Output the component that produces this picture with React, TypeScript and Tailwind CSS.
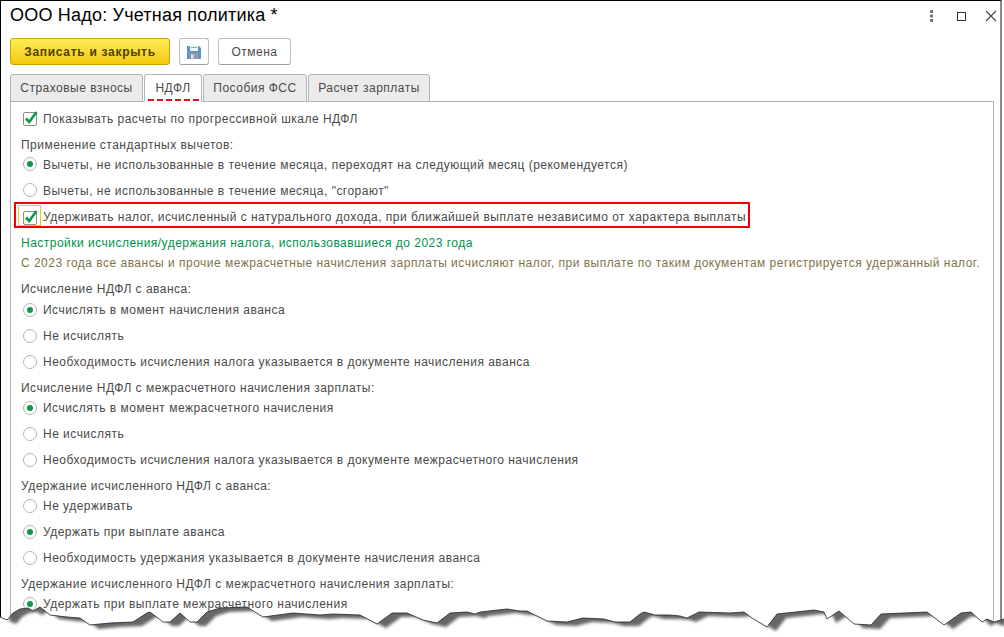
const font = { fontFamily: '"Liberation Sans", Arial, sans-serif' };

const edge: [number, number][] = [
  [0, 617], [7, 620], [13, 613], [20, 609], [28, 608], [33, 611], [40, 607], [50, 615], [67, 617], [80, 618],
  [90, 625], [110, 623], [133, 622], [147, 613], [150, 612], [163, 622], [170, 622], [180, 613], [190, 622],
  [197, 622], [207, 612], [220, 608], [247, 607], [263, 617], [293, 613], [320, 615], [333, 614], [360, 615],
  [377, 624], [392, 613], [407, 613], [423, 620], [437, 623], [450, 613], [467, 612], [475, 614], [480, 612],
  [507, 609], [520, 611], [527, 611], [547, 621], [567, 622], [583, 618], [604, 619], [615, 622], [630, 622],
  [640, 614], [644, 612], [655, 615], [670, 615], [680, 616], [687, 618], [699, 612], [730, 613], [744, 612],
  [752, 618], [767, 627], [777, 614], [814, 610], [824, 612], [827, 619], [839, 611], [854, 624], [871, 625],
  [881, 614], [927, 612], [944, 625], [961, 613], [971, 612], [982, 622], [987, 619], [994, 622], [1004, 619],
];
const line = edge.map(([x, y]) => `${x},${y}`).join(" ");

function Check() {
  return (
    <svg width="16" height="16" viewBox="0 0 16 16" className="shrink-0">
      <rect x="0.5" y="2.5" width="13" height="13" rx="1.5" fill="#fff" stroke="#8f8f8f" />
      <path d="M3 8.5 L6.2 12 L13.5 2" fill="none" stroke="#0b9a4b" strokeWidth="2.6" />
    </svg>
  );
}

function Radio({ on }: { on?: boolean }) {
  return (
    <span className="w-[14px] h-[14px] shrink-0 rounded-full border border-[#b4b4b4] bg-white flex items-center justify-center">
      {on && <span className="w-[6px] h-[6px] rounded-full bg-[#0b9a4b]" />}
    </span>
  );
}

function Option({ text, on, mt, tx = "" }: { text: string; on?: boolean; mt: string; tx?: string }) {
  return (
    <div className={`h-[20px] flex items-center pl-[12px] gap-[6px] ${mt}`}>
      <Radio on={on} />
      <span className={tx}>{text}</span>
    </div>
  );
}

function Label({ text, mt, tx = "" }: { text: string; mt: string; tx?: string }) {
  return <div className={`h-[20px] flex items-center pl-[10px] ${mt} ${tx}`}>{text}</div>;
}

function Tab({ text, w, active }: { text: string; w: string; active?: boolean }) {
  return (
    <div
      className={`relative h-[28px] flex items-center justify-center border border-[#b4b4b4] rounded-t-[3px] ${w} ${
        active ? "bg-white border-b-white z-10" : "bg-[#ebebeb]"
      }`}
    >
      {text}
      {active && <span className="absolute left-[3px] right-[2px] bottom-0 border-b-2 border-dashed border-[#e81010]" />}
    </div>
  );
}

export default function App() {
  return (
    <div style={font} className="relative w-[1004px] h-[637px] overflow-hidden bg-white text-[12px] tracking-[0.48px] text-[#4a4a4a]">
      <div className="w-[1002px] h-[637px] border-t border-l border-t-black border-l-black border-r-2 border-r-[#8a8a8a] flex flex-col">
        <div className="h-[29px] flex items-center justify-between pl-[9px] pr-[3px] shrink-0">
          <span className="text-[18px] tracking-[0.2px] text-black">ООО Надо: Учетная политика *</span>
          <div className="flex items-center pt-[1px]">
            <svg width="3" height="12" viewBox="0 0 3 12">
              <rect x="0" y="0" width="3" height="3" fill="#777" />
              <rect x="0" y="4.5" width="3" height="3" fill="#777" />
              <rect x="0" y="9" width="3" height="3" fill="#777" />
            </svg>
            <div className="w-[9px] h-[9px] border border-[#333] ml-[24px]" />
            <svg width="12" height="12" viewBox="0 0 12 12" className="ml-[19px]">
              <path d="M1 1 L11 11 M11 1 L1 11" stroke="#444" strokeWidth="1.1" />
            </svg>
          </div>
        </div>

        <div className="h-[27px] mt-[8px] flex items-stretch pl-[9px] shrink-0">
          <button className="w-[160px] rounded-[3px] border border-[#c9a400] bg-gradient-to-b from-[#ffec55] to-[#f3c800] font-bold text-[#4d4100] tracking-[0.7px] text-[12px]">
            Записать и закрыть
          </button>
          <button className="w-[30px] ml-[9px] rounded-[3px] border border-[#bdbdbd] border-b-[#9f9f9f] bg-white flex items-center justify-center">
            <svg width="14" height="14" viewBox="0 0 14 14">
              <path d="M0 1 H12 L14 3 V14 H0 Z" fill="#5f93c9" />
              <rect x="3" y="1" width="8" height="5" fill="#eef3f8" />
              <rect x="4" y="2" width="6" height="1" fill="#7fa6cf" />
              <rect x="3" y="8" width="8" height="6" fill="#8f9ba6" />
              <rect x="4" y="9.5" width="2.5" height="4" fill="#dfe4e8" />
            </svg>
          </button>
          <button className="w-[73px] ml-[9px] rounded-[3px] border border-[#bdbdbd] border-b-[#9f9f9f] bg-white text-[12px] text-[#4a4a4a]">
            Отмена
          </button>
        </div>

        <div className="flex pl-[9px] gap-[1px] mt-[9px] -mb-px shrink-0">
          <Tab text="Страховые взносы" w="w-[133px]" />
          <Tab text="НДФЛ" w="w-[58px]" active />
          <Tab text="Пособия ФСС" w="w-[104px]" />
          <Tab text="Расчет зарплаты" w="w-[122px]" />
        </div>

        <div className="ml-[9px] w-[984px] flex-1 border-t border-l border-r border-[#b4b4b4] pt-[6px]">
          <div className="h-[20px] flex items-center pl-[12px] gap-[4px]">
            <Check />
            <span className="pt-[2px]">Показывать расчеты по прогрессивной шкале НДФЛ</span>
          </div>
          <Label text="Применение стандартных вычетов:" mt="mt-[6px]" tx="pt-[2px]" />
          <Option on text="Вычеты, не использованные в течение месяца, переходят на следующий месяц (рекомендуется)" mt="mt-0" tx="pt-[2px]" />
          <Option text={'Вычеты, не использованные в течение месяца, "сгорают"'} mt="mt-[6px]" tx="pt-[2px]" />

          <div className="relative h-[20px] flex items-center pl-[12px] gap-[4px] mt-[7px]">
            <span className="absolute left-[3px] -top-[5px] w-[736px] h-[26px] border-2 border-[#f00000]" />
            <span className="absolute left-[7px] -top-[2px] w-[23px] h-[21px] border border-[#f5c518]" />
            <span className="relative"><Check /></span>
            <span className="relative">Удерживать налог, исчисленный с натурального дохода, при ближайшей выплате независимо от характера выплаты</span>
          </div>

          <div className="h-[20px] flex items-center pl-[10px] pt-[2px] mt-[5px] text-[#00924a]">Настройки исчисления/удержания налога, использовавшиеся до 2023 года</div>
          <div className="h-[20px] flex items-center pl-[10px] mt-px text-[#7f7448]">С 2023 года все авансы и прочие межрасчетные начисления зарплаты исчисляют налог, при выплате по таким документам регистрируется удержанный налог.</div>

          <Label text="Исчисление НДФЛ с аванса:" mt="mt-[6px]" />
          <Option on text="Исчислять в момент начисления аванса" mt="mt-px" />
          <Option text="Не исчислять" mt="mt-[6px]" />
          <Option text="Необходимость исчисления налога указывается в документе начисления аванса" mt="mt-[6px]" />

          <Label text="Исчисление НДФЛ с межрасчетного начисления зарплаты:" mt="mt-[6px]" />
          <Option on text="Исчислять в момент межрасчетного начисления" mt="mt-0" />
          <Option text="Не исчислять" mt="mt-[6px]" />
          <Option text="Необходимость исчисления налога указывается в документе межрасчетного начисления" mt="mt-[6px]" />

          <Label text="Удержание исчисленного НДФЛ с аванса:" mt="mt-[6px]" />
          <Option text="Не удерживать" mt="mt-0" />
          <Option on text="Удержать при выплате аванса" mt="mt-[6px]" />
          <Option text="Необходимость удержания указывается в документе начисления аванса" mt="mt-[6px]" />

          <Label text="Удержание исчисленного НДФЛ с межрасчетного начисления зарплаты:" mt="mt-[6px]" />
          <Option on text="Удержать при выплате межрасчетного начисления" mt="mt-0" />
        </div>
      </div>

      {/* torn paper edge */}
      <svg width="1004" height="637" viewBox="0 0 1004 637" className="absolute left-0 top-0 pointer-events-none">
        <defs>
          <filter id="blur" x="-5%" y="-5%" width="110%" height="110%">
            <feGaussianBlur stdDeviation="1.8" />
          </filter>
          <clipPath id="below">
            <polygon points={`${line} 1004,637 0,637`} />
          </clipPath>
        </defs>
        <polygon points={`${line} 1004,637 0,637`} fill="#fff" />
        <g clipPath="url(#below)">
          <polygon points={`0,0 1004,0 ${[...edge].reverse().map(([x, y]) => `${x},${y}`).join(" ")}`} transform="translate(9,4)" fill="#666" filter="url(#blur)" />
        </g>
        <polyline points={line} fill="none" stroke="#222" strokeWidth="0.8" />
      </svg>
    </div>
  );
}
